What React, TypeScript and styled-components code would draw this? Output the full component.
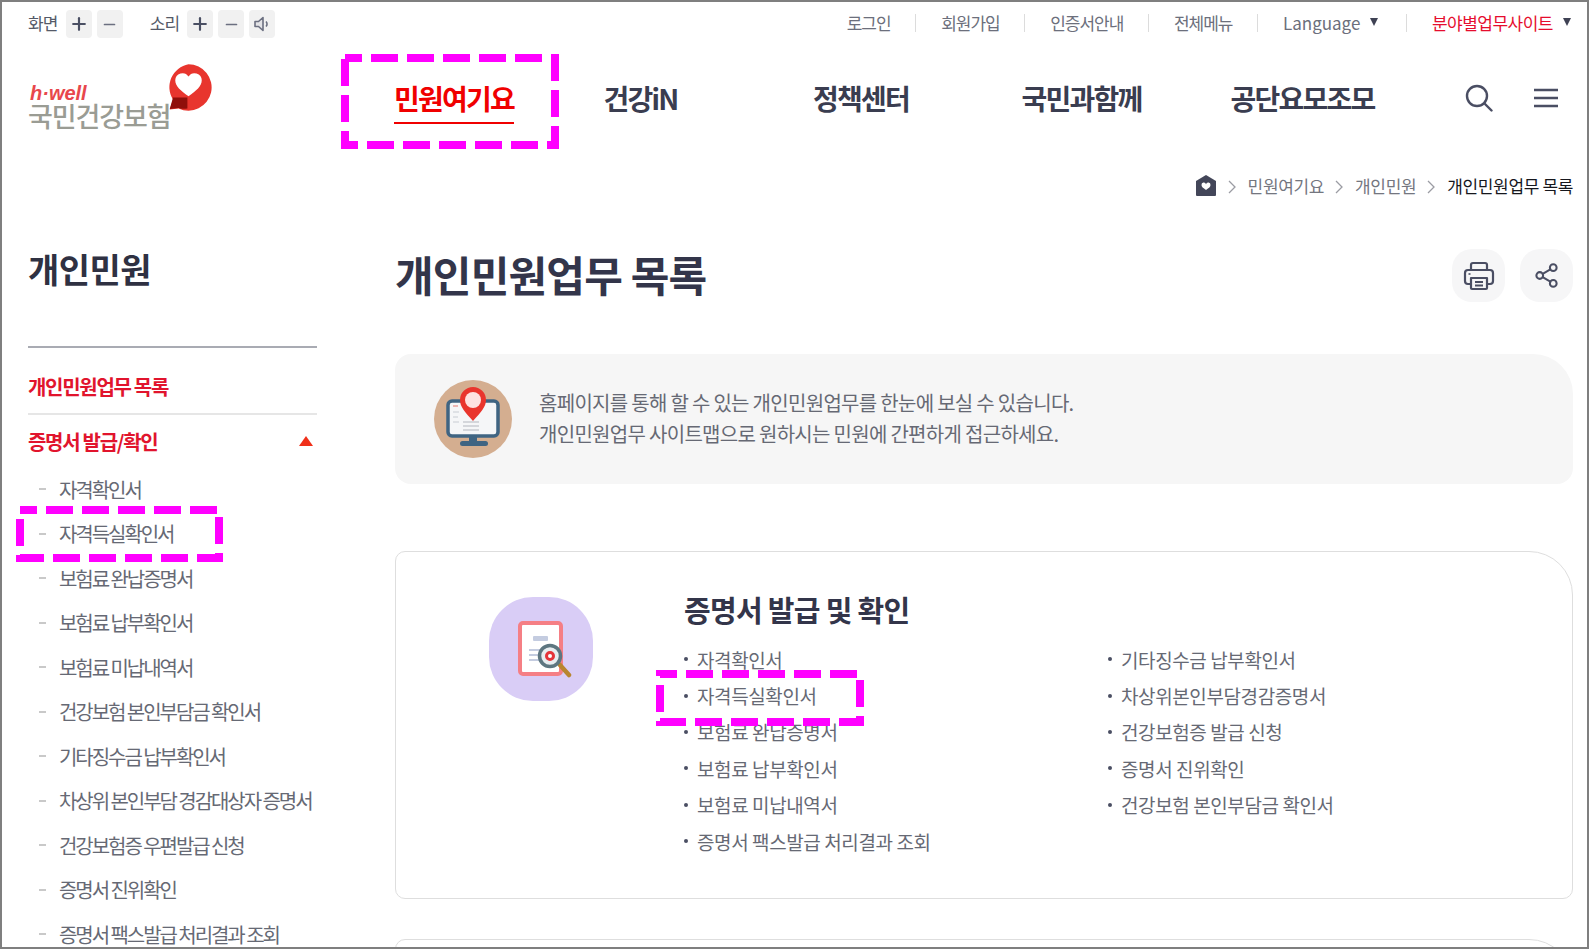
import React from "react";
import styled, { createGlobalStyle } from "styled-components";
import { Share2, Plus, Minus } from "lucide-react";

const KR = `"Noto Sans CJK KR", "Noto Sans", sans-serif`;

const GlobalStyle = createGlobalStyle`
  html, body { margin: 0; padding: 0; background: #fff; }
  * { box-sizing: border-box; }
  body { font-family: ${KR}; color: #3f4254; }
  ul { list-style: none; margin: 0; padding: 0; }
`;

const Frame = styled.div`
  position: relative;
  width: 1589px;
  height: 949px;
  border: 2px solid #7f7f7f;
  overflow: hidden;
  background: #fff;
`;

const TopBar = styled.div`
  display: flex;
  justify-content: space-between;
  align-items: center;
  height: 44px;
  padding: 0 16px 0 26px;
`;

const Controls = styled.div`
  display: flex;
  align-items: center;
`;

const ControlLabel = styled.span<{ $first?: boolean }>`
  font-size: 17px;
  letter-spacing: -0.8px;
  color: #555a68;
  margin: 0 8px 3px ${(p) => (p.$first ? 0 : "22px")};
`;

const ControlButton = styled.button`
  display: flex;
  align-items: center;
  justify-content: center;
  width: 26px;
  height: 28px;
  margin-right: 5px;
  padding: 0;
  border: 0;
  border-radius: 4px;
  background: #f1f1f1;
  color: #4a4f63;
`;

const Util = styled.ul`
  display: flex;
  align-items: center;
  margin-bottom: 4px;
`;

const UtilItem = styled.li<{ $red?: boolean; $last?: boolean; $pad?: number }>`
  position: relative;
  display: flex;
  align-items: center;
  font-size: 17px;
  letter-spacing: ${(p) => (p.$red ? "-0.5px" : "-1px")};
  color: ${(p) => (p.$red ? "#e60d2e" : "#6c6f7c")};
  padding-right: ${(p) => (p.$last ? 0 : `${p.$pad ?? 25.5}px`)};
  margin-right: ${(p) => (p.$last ? 0 : "25px")};
  &::after {
    content: "";
    display: ${(p) => (p.$last ? "none" : "block")};
    position: absolute;
    right: 0;
    top: 4px;
    width: 1px;
    height: 18px;
    background: #dcdcdc;
  }
`;

const LatinLabel = styled.span`
  letter-spacing: 0;
`;

const Caret = styled.i`
  display: inline-block;
  margin-left: 10px;
  border-left: 4.5px solid transparent;
  border-right: 4.5px solid transparent;
  border-top: 8px solid #3f4254;
`;

const NavRow = styled.div`
  display: flex;
  align-items: center;
  height: 104px;
  padding-left: 26px;
`;

const Logo = styled.div`
  position: relative;
  width: 350px;
  height: 80px;
  margin-top: 12px;
`;

const LogoSmall = styled.span`
  position: absolute;
  left: 2px;
  top: 21px;
  font-family: "Liberation Sans", sans-serif;
  font-size: 20px;
  font-weight: 700;
  font-style: italic;
  color: #e8474c;
  line-height: 16px;
`;

const LogoBig = styled.span`
  position: absolute;
  left: 0;
  top: 38px;
  font-size: 27px;
  font-weight: 500;
  letter-spacing: -1.1px;
  color: #9a9c94;
  line-height: 1;
`;

const LogoMark = styled.svg`
  position: absolute;
  left: 134px;
  top: -3px;
`;

const Nav = styled.nav`
  display: grid;
  grid-template-columns: 152px 221px 220px 221px 221px;
`;

const NavItem = styled.a<{ $active?: boolean }>`
  justify-self: center;
  font-size: 28px;
  font-weight: 700;
  letter-spacing: -1.8px;
  line-height: 40px;
  padding-bottom: 4px;
  color: ${(p) => (p.$active ? "#f00000" : "#3a3d50")};
  border-bottom: 2px solid ${(p) => (p.$active ? "#f00000" : "transparent")};
  margin-top: 5px;
`;

const NavIcons = styled.div`
  display: flex;
  align-items: center;
  gap: 40px;
  margin-left: 52px;
  color: #4a4e63;
`;

const Crumbs = styled.div`
  display: flex;
  justify-content: flex-end;
  align-items: center;
  height: 30px;
  margin-top: 20px;
  padding-right: 14px;
  font-size: 17px;
  letter-spacing: -0.35px;
  color: #74767f;
`;

const CrumbSep = styled.svg`
  margin: 3px 12px 0 11px;
`;

const CrumbNow = styled.span`
  color: #16171d;
`;

const Columns = styled.div`
  display: flex;
  padding-left: 26px;
  padding-top: 26px;
`;

const Sidebar = styled.aside`
  width: 289px;
  margin-right: 78px;
  flex-shrink: 0;
`;

const SideTitle = styled.h2`
  margin: 0;
  height: 122px;
  padding-top: 18px;
  font-size: 34px;
  line-height: 50px;
  font-weight: 700;
  letter-spacing: -0.5px;
  color: #2f3142;
  border-bottom: 2px solid #a9abb3;
`;

const SideHead = styled.div<{ $line?: boolean }>`
  display: flex;
  justify-content: space-between;
  align-items: center;
  height: ${(p) => (p.$line ? "67px" : "52px")};
  padding-top: ${(p) => (p.$line ? "12px" : "0")};
  font-size: 20px;
  font-weight: 700;
  letter-spacing: -1.3px;
  color: #e1142d;
  border-bottom: ${(p) => (p.$line ? "2px solid #e6e6e6" : "0")};
`;

const UpCaret = styled.i`
  margin-right: 4px;
  border-left: 7px solid transparent;
  border-right: 7px solid transparent;
  border-top: 0;
  border-bottom: 10px solid #f0301a;
`;

const SubItem = styled.li`
  display: flex;
  align-items: center;
  height: 44.5px;
  font-size: 20px;
  letter-spacing: -2.05px;
  color: #666974;
  white-space: nowrap;
  &::before {
    content: "";
    width: 7px;
    height: 2px;
    margin: 0 13px 0 11px;
    background: #c9c9c9;
  }
`;

const Main = styled.main`
  width: 1178px;
`;

const TitleRow = styled.div`
  display: flex;
  justify-content: space-between;
  align-items: flex-start;
  height: 128px;
`;

const PageTitle = styled.h1`
  margin: 0;
  padding-top: 18px;
  font-size: 42px;
  line-height: 60px;
  font-weight: 700;
  letter-spacing: -0.8px;
  color: #33354a;
`;

const RoundActions = styled.div`
  display: flex;
  gap: 15px;
  margin-top: 23px;
`;

const RoundButton = styled.button`
  display: flex;
  align-items: center;
  justify-content: center;
  width: 53px;
  height: 53px;
  padding: 0;
  border: 0;
  border-radius: 20px;
  background: #f6f6f7;
  color: #4a4e63;
`;

const InfoBox = styled.section`
  display: flex;
  align-items: center;
  gap: 27px;
  height: 130px;
  padding-left: 39px;
  background: #f6f6f6;
  border-radius: 16px 40px 16px 16px;
`;

const InfoText = styled.p`
  margin: 0 0 2px;
  font-size: 20px;
  line-height: 31px;
  letter-spacing: -0.7px;
  color: #666974;
`;

const Card = styled.section`
  display: flex;
  height: 348px;
  margin-top: 67px;
  padding: 45px 0 0 93px;
  border: 1px solid #dedede;
  border-radius: 10px 44px 10px 10px;
`;

const NextCard = styled(Card)`
  margin-top: 40px;
`;

const Squircle = styled.div`
  display: flex;
  align-items: center;
  justify-content: center;
  width: 104px;
  height: 104px;
  margin-right: 91px;
  border-radius: 44px;
  background: #d9cdf6;
`;

const DocumentSvg = styled.svg`
  margin-left: 8px;
`;

const CardTitle = styled.h3`
  margin: -12px 0 8px;
  font-size: 29px;
  line-height: 48px;
  font-weight: 700;
  letter-spacing: -0.7px;
  color: #33354a;
`;

const LinkColumns = styled.div`
  display: grid;
  grid-template-columns: 424px 424px;
`;

const LinkItem = styled.li`
  display: flex;
  align-items: center;
  height: 36.4px;
  font-size: 19px;
  letter-spacing: -0.4px;
  color: #666974;
  white-space: nowrap;
  &::before {
    content: "";
    width: 4px;
    height: 4px;
    margin-right: 9px;
    border-radius: 50%;
    background: #4a4e63;
  }
`;

const Annotation = styled.svg`
  position: absolute;
  overflow: visible;
`;

const Dashed: React.FC<{ x: number; y: number; w: number; h: number }> = ({ x, y, w, h }) => (
  <Annotation width={w} height={h} style={{ left: x - 2, top: y - 2 }}>
    <rect
      x={4}
      y={4}
      width={w - 8}
      height={h - 8}
      fill="none"
      stroke="#ff00ff"
      strokeWidth={8}
      strokeDasharray="27 9"
      strokeDashoffset={10}
    />
  </Annotation>
);

const Chevron = () => (
  <CrumbSep width="8" height="14" viewBox="0 0 8 14" fill="none" stroke="#9b9ca3" strokeWidth="1.3">
    <path d="M1 1l6 6-6 6" />
  </CrumbSep>
);

const sideSub = [
  "자격확인서",
  "자격득실확인서",
  "보험료 완납증명서",
  "보험료 납부확인서",
  "보험료 미납내역서",
  "건강보험 본인부담금 확인서",
  "기타징수금 납부확인서",
  "차상위 본인부담 경감대상자 증명서",
  "건강보험증 우편발급 신청",
  "증명서 진위확인",
  "증명서 팩스발급 처리결과 조회",
];

const linksLeft = [
  "자격확인서",
  "자격득실확인서",
  "보험료 완납증명서",
  "보험료 납부확인서",
  "보험료 미납내역서",
  "증명서 팩스발급 처리결과 조회",
];

const linksRight = [
  "기타징수금 납부확인서",
  "차상위본인부담경감증명서",
  "건강보험증 발급 신청",
  "증명서 진위확인",
  "건강보험 본인부담금 확인서",
];

const SpeakerIcon = () => (
  <svg width="18" height="18" viewBox="0 0 18 18" fill="#e3e3e6" stroke="#6b6f80" strokeWidth="1.6" strokeLinejoin="round">
    <path d="M2 6.500h3.500L10 2.500v13l-4.500-4H2z" />
    <path d="M13 6.500a3.500 3.500 0 0 1 0 5" fill="none" />
  </svg>
);

const SearchIcon = () => (
  <svg width="28" height="28" viewBox="0 0 28 28" fill="none" stroke="currentColor" strokeWidth="2.400" strokeLinecap="round">
    <circle cx="12" cy="12" r="10" />
    <path d="M19.500 19.500l7 7" />
  </svg>
);

const PrinterIcon = () => (
  <svg width="32" height="32" viewBox="0 0 32 32" fill="none" stroke="currentColor" strokeWidth="2.200" strokeLinejoin="round">
    <path d="M8 10V5a2 2 0 0 1 2-2h12a2 2 0 0 1 2 2v5" />
    <rect x="2" y="10" width="28" height="14" rx="3" />
    <path d="M8 18h16v10a1 1 0 0 1-1 1H9a1 1 0 0 1-1-1z" fill="#f6f6f7" />
    <path d="M12 22h8M12 25.500h8" strokeWidth="1.800" />
    <path d="M5.500 14h2" strokeWidth="1.600" />
  </svg>
);

const MonitorIcon = () => (
  <svg width="78" height="78" viewBox="0 0 78 78">
    <circle cx="39" cy="39" r="39" fill="#d4ae90" />
    <rect x="14" y="21" width="50" height="35" rx="4" fill="#f5f6f8" stroke="#3f6482" strokeWidth="3.500" />
    <rect x="35" y="57" width="8" height="5" fill="#3f6482" />
    <rect x="26" y="61" width="28" height="5" rx="2.500" fill="#3f6482" />
    <path d="M19 26h5" stroke="#e9a09c" strokeWidth="1.500" />
    <path d="M19 32h6M19 37h5M19 42h6" stroke="#c8ccd3" strokeWidth="1" />
    <path d="M29 42h16M29 46h16M29 50h16" stroke="#d4d6db" strokeWidth="2" />
    <path d="M39 41c-8-9-13-14-13-21a13 13 0 0 1 26 0c0 7-5 12-13 21z" fill="#e9352d" />
    <circle cx="39" cy="20" r="8" fill="#fde2e0" />
  </svg>
);

const DocumentIcon = () => (
  <DocumentSvg width="54" height="57" viewBox="0 0 54 57">
    <rect x="2" y="2" width="41" height="51" rx="3" fill="#fff" stroke="#f57f85" strokeWidth="4" />
    <rect x="15" y="15" width="15" height="5" rx="1" fill="#c4cce0" />
    <path d="M11 29h12M11 34h10M11 39h10" stroke="#c4cce0" strokeWidth="1.800" />
    <path d="M42 44l9 10" stroke="#b8852f" strokeWidth="4.500" strokeLinecap="round" />
    <circle cx="32" cy="35" r="10.500" fill="#e8edf0" stroke="#5d7680" strokeWidth="3.500" />
    <circle cx="32" cy="35" r="3.500" fill="#fff" stroke="#e5343a" strokeWidth="3" />
  </DocumentSvg>
);

const App: React.FC = () => {
  return (
    <Frame>
      <GlobalStyle />
      <TopBar>
        <Controls>
          <ControlLabel $first>화면</ControlLabel>
          <ControlButton><Plus size={20} strokeWidth={2.6} /></ControlButton>
          <ControlButton><Minus size={17} strokeWidth={2.4} color="#6b6f80" /></ControlButton>
          <ControlLabel>소리</ControlLabel>
          <ControlButton><Plus size={20} strokeWidth={2.6} /></ControlButton>
          <ControlButton><Minus size={17} strokeWidth={2.4} color="#6b6f80" /></ControlButton>
          <ControlButton><SpeakerIcon /></ControlButton>
        </Controls>
        <Util>
          <UtilItem>로그인</UtilItem>
          <UtilItem>회원가입</UtilItem>
          <UtilItem>인증서안내</UtilItem>
          <UtilItem>전체메뉴</UtilItem>
          <UtilItem $pad={28.5}><LatinLabel>Language</LatinLabel><Caret /></UtilItem>
          <UtilItem $red $last>분야별업무사이트<Caret /></UtilItem>
        </Util>
      </TopBar>

      <NavRow>
        <Logo>
          <LogoSmall>h·well</LogoSmall>
          <LogoBig>국민건강보험</LogoBig>
          <LogoMark width="53" height="53" viewBox="0 0 48 48">
            <path d="M24 3a21 21 0 1 1-9 40l-8 1 3-9A21 21 0 0 1 24 3z" fill="#e8352e" />
            <path d="M10 33h13v10c-3 .5-6 .3-8-.5l-8 1z" fill="#8f0f0b" />
            <path d="M24 32c-7-5-12-9-12-14.500a6.500 6.500 0 0 1 12-3.400 6.500 6.500 0 0 1 12 3.400C36 23 31 27 24 32z" fill="#fff" />
          </LogoMark>
        </Logo>
        <Nav>
          <NavItem $active>민원여기요</NavItem>
          <NavItem>건강iN</NavItem>
          <NavItem>정책센터</NavItem>
          <NavItem>국민과함께</NavItem>
          <NavItem>공단요모조모</NavItem>
        </Nav>
        <NavIcons>
          <SearchIcon />
          <svg width="26" height="20" viewBox="0 0 26 20" stroke="currentColor" strokeWidth="2.400">
            <path d="M1 2h24M1 10h24M1 18h24" />
          </svg>
        </NavIcons>
      </NavRow>

      <Crumbs>
        <svg width="22" height="22" viewBox="0 0 22 22">
          <path d="M1 7l10-6 10 6v14a1 1 0 0 1-1 1H2a1 1 0 0 1-1-1z" fill="#434659" />
          <path d="M11 16c-3-2-4.500-3.300-4.500-5a2.300 2.300 0 0 1 4.500-.8 2.300 2.300 0 0 1 4.500.8c0 1.700-1.500 3-4.500 5z" fill="#fff" />
        </svg>
        <Chevron />
        <span>민원여기요</span>
        <Chevron />
        <span>개인민원</span>
        <Chevron />
        <CrumbNow>개인민원업무 목록</CrumbNow>
      </Crumbs>

      <Columns>
        <Sidebar>
          <SideTitle>개인민원</SideTitle>
          <SideHead $line>개인민원업무 목록</SideHead>
          <SideHead>증명서 발급/확인<UpCaret /></SideHead>
          <ul>
            {sideSub.map((item) => (
              <SubItem key={item}>{item}</SubItem>
            ))}
          </ul>
        </Sidebar>
        <Main>
          <TitleRow>
            <PageTitle>개인민원업무 목록</PageTitle>
            <RoundActions>
              <RoundButton><PrinterIcon /></RoundButton>
              <RoundButton><Share2 size={27} strokeWidth={1.8} /></RoundButton>
            </RoundActions>
          </TitleRow>
          <InfoBox>
            <MonitorIcon />
            <InfoText>
              홈페이지를 통해 할 수 있는 개인민원업무를 한눈에 보실 수 있습니다.
              <br />
              개인민원업무 사이트맵으로 원하시는 민원에 간편하게 접근하세요.
            </InfoText>
          </InfoBox>
          <Card>
            <Squircle><DocumentIcon /></Squircle>
            <div>
              <CardTitle>증명서 발급 및 확인</CardTitle>
              <LinkColumns>
                <ul>{linksLeft.map((l) => <LinkItem key={l}>{l}</LinkItem>)}</ul>
                <ul>{linksRight.map((l) => <LinkItem key={l}>{l}</LinkItem>)}</ul>
              </LinkColumns>
            </div>
          </Card>
          <NextCard />
        </Main>
      </Columns>

      <Dashed x={341} y={54} w={218} h={95} />
      <Dashed x={16} y={506} w={207} h={56} />
      <Dashed x={656} y={670} w={208} h={56} />
    </Frame>
  );
};

export default App;
